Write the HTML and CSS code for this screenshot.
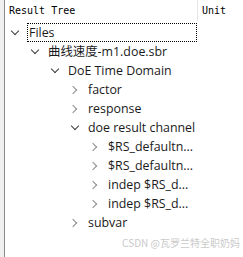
FILE: index.html
```html
<!DOCTYPE html>
<html lang="en">
<head>
    <meta charset="UTF-8">
    <title>Result Tree</title>
    <link rel="stylesheet" href="styles.css">
</head>
<body>
    <div class="panel">
        <div class="gutter"></div>
        <div class="main">
            <div class="header">
                <div class="col-name">Result Tree</div>
                <div class="col-unit">Unit</div>
            </div>

            <ul class="tree">
                <li class="row lvl0 open"><span class="arrow"></span><span class="label focus">Files</span></li>
                <li class="row lvl1 open"><span class="arrow"></span><span class="label">曲线速度-m1.doe.sbr</span></li>
                <li class="row lvl2 open"><span class="arrow"></span><span class="label">DoE Time Domain</span></li>
                <li class="row lvl3 closed"><span class="arrow"></span><span class="label">factor</span></li>
                <li class="row lvl3 closed"><span class="arrow"></span><span class="label">response</span></li>
                <li class="row lvl3 open"><span class="arrow"></span><span class="label">doe result channel</span></li>
                <li class="row lvl4 closed"><span class="arrow"></span><span class="label">$RS_defaultn...</span></li>
                <li class="row lvl4 closed"><span class="arrow"></span><span class="label">$RS_defaultn...</span></li>
                <li class="row lvl4 closed"><span class="arrow"></span><span class="label">indep $RS_d...</span></li>
                <li class="row lvl4 closed"><span class="arrow"></span><span class="label">indep $RS_d...</span></li>
                <li class="row lvl3 closed"><span class="arrow"></span><span class="label">subvar</span></li>
            </ul>

            <div class="watermark">CSDN @瓦罗兰特全职奶妈</div>
        </div>
    </div>
</body>
</html>
```

FILE: styles.css
```css
* {
    margin: 0;
    padding: 0;
    box-sizing: border-box;
}
body {
    font-family: 'Segoe UI', 'Open Sans', 'Noto Sans CJK SC', sans-serif;
    font-size: 12.4px;
    color: #1a1a1a;
    background: #fff;
}
.panel {
    display: flex;
    height: 257px;
}
.gutter {
    width: 5px;
    background: #f0f0f0;
    border-right: 1px solid #8a8a8a;
}
.main {
    flex: 1;
    display: flex;
    flex-direction: column;
}
.header {
    display: flex;
    height: 21px;
    font-family: 'DejaVu Sans Mono', monospace;
    font-size: 10px;
    color: #000;
}
.col-name {
    width: 193px;
    padding: 5px 0 0 4px;
    border-right: 1px solid #e5e5e5;
}
.col-unit {
    padding: 5px 0 0 4px;
}
.tree {
    list-style: none;
    margin-top: 2px;
    width: 192px;
}
.row {
    display: flex;
    align-items: center;
    height: 19px;
}
.lvl0 { padding-left: 6px; }
.lvl1 { padding-left: 26px; }
.lvl2 { padding-left: 46px; }
.lvl3 { padding-left: 66px; }
.lvl4 { padding-left: 86px; }
.arrow {
    width: 16px;
    height: 19px;
    flex: none;
    position: relative;
}
.arrow::before {
    content: '';
    position: absolute;
    width: 5px;
    height: 5px;
    border-right: 1.3px solid;
    border-bottom: 1.3px solid;
}
.open .arrow::before {
    left: 1px;
    top: 5px;
    transform: rotate(45deg);
    border-color: #3c3c3c;
}
.closed .arrow::before {
    left: -1px;
    top: 7px;
    transform: rotate(-45deg);
    border-color: #8c8c8c;
}
.label {
    white-space: nowrap;
    line-height: 17px;
    padding: 0 1px;
}
.focus {
    flex: 1;
    border: 1px dotted #000;
}
.watermark {
    margin-top: auto;
    align-self: flex-end;
    padding: 0 3px 7px 0;
    font-family: 'Noto Sans CJK SC', sans-serif;
    font-size: 10px;
    color: #cacaca;
}
```
